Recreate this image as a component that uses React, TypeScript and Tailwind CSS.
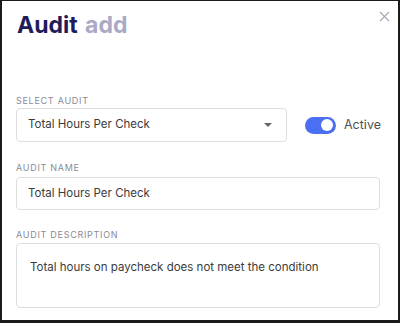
import React from "react";
import { X } from "lucide-react";

const labelCls =
  "block text-[9px] leading-[10px] tracking-[0.08em] text-[#8a8a98] uppercase mb-[2px]";

const fieldCls =
  "border border-[#dedede] rounded-[4px] bg-white text-[11.5px] text-[#3b3b3b]";

export default function App() {
  return (
    <div
      className="w-[400px] h-[323px] bg-white border-t border-x-2 border-b-[3px] border-[#1b1b1b] px-[14px] pt-[8px]"
      style={{ fontFamily: "Inter, 'Noto Sans', sans-serif" }}
    >
      {/* Header */}
      <div className="flex items-start justify-between">
        <h1 className="text-[23px] leading-[32px] font-bold text-[#1f1b5c] pl-[1px]">
          Audit <span className="ml-[2px] text-[#aaa9c6]">add</span>
        </h1>
        <button className="-mr-[9px] mt-[-1px] text-[#a6a6b6]">
          <X size={17} strokeWidth={1.6} />
        </button>
      </div>

      {/* Select audit */}
      <div className="mt-[55px]">
        <label className={labelCls}>Select Audit</label>
        <div className="flex items-center">
          <div
            className={`${fieldCls} w-[271px] h-[34px] flex items-center justify-between pl-[11px] pr-[14px]`}
          >
            <span>Total Hours Per Check</span>
            <span className="w-0 h-0 border-x-[4px] border-x-transparent border-t-[4px] border-t-[#666]" />
          </div>
          <div className="ml-[18px] w-[31px] h-[17px] rounded-full bg-[#4b6ff2] flex items-center justify-end pr-[3px]">
            <span className="w-[12px] h-[12px] rounded-full bg-white" />
          </div>
          <span className="ml-[8px] text-[12.5px] text-[#505050]">Active</span>
        </div>
      </div>

      {/* Audit name */}
      <div className="mt-[21px]">
        <label className={`${labelCls} !mb-[4px]`}>Audit Name</label>
        <div className={`${fieldCls} w-[364px] h-[33px] flex items-center pl-[11px]`}>
          Total Hours Per Check
        </div>
      </div>

      {/* Audit description */}
      <div className="mt-[20px]">
        <label className={`${labelCls} !mb-[3px]`}>Audit Description</label>
        <div className={`${fieldCls} w-[364px] h-[65px] pl-[13px] pt-[14px] leading-[18px]`}>
          Total hours on paycheck does not meet the condition
        </div>
      </div>
    </div>
  );
}
